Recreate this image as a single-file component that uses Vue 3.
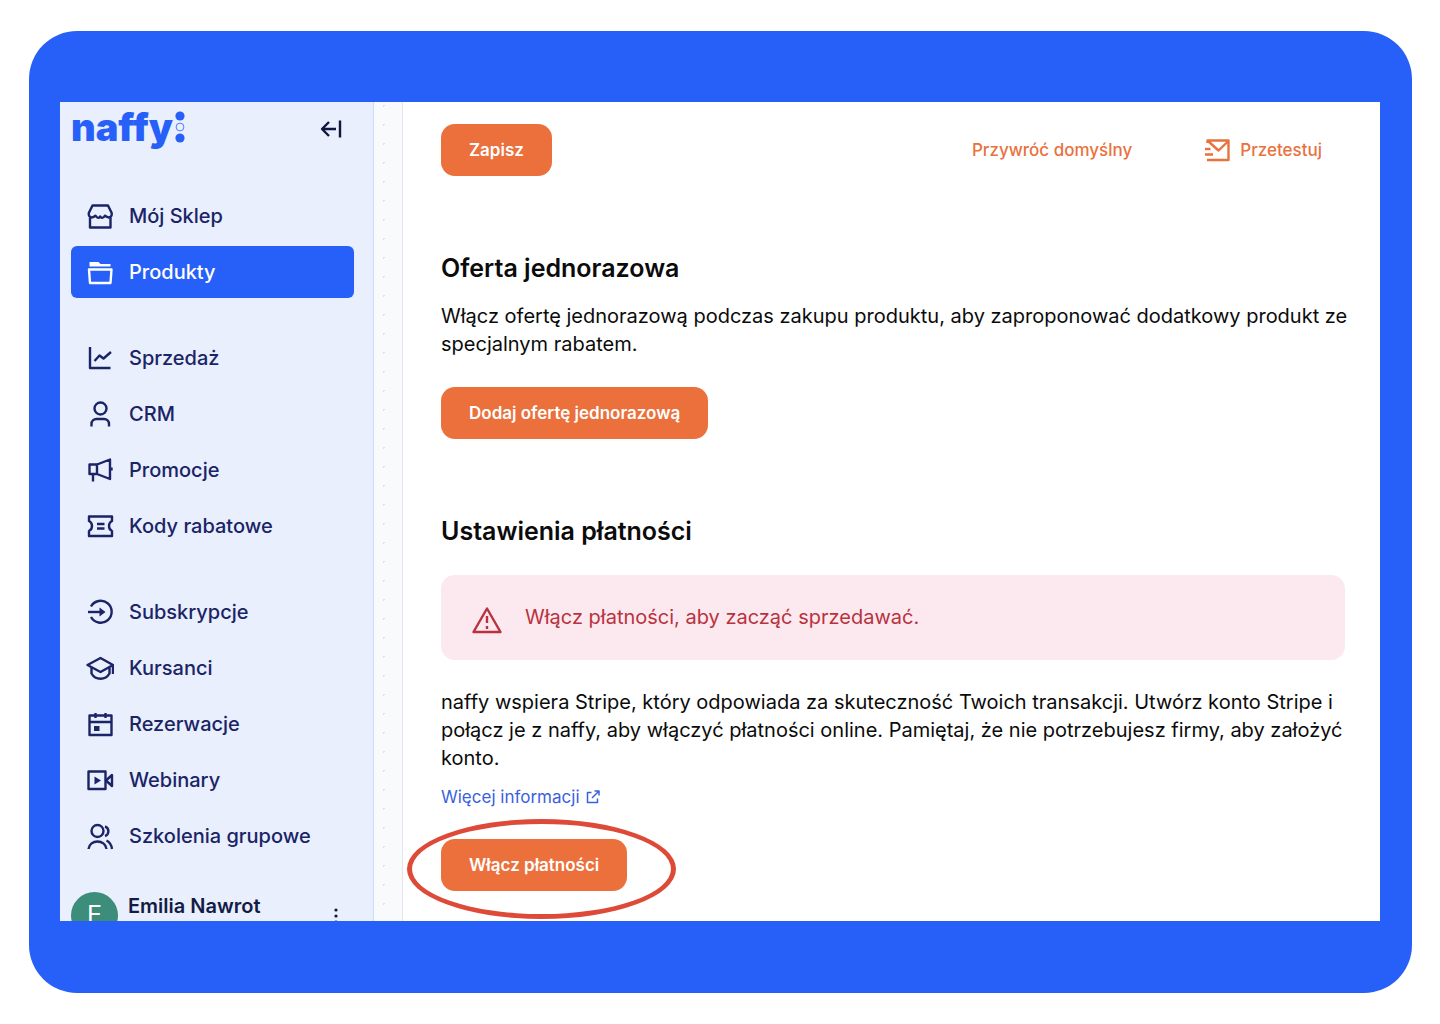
<template>
  <div class="page">
    <div class="frame">
      <div class="window">
        <aside class="sidebar">
          <header class="brand">
            <a class="logo" href="#">
              <span>naffy</span>
              <svg width="10" height="32" viewBox="0 0 10 32" aria-hidden="true">
                <circle cx="5" cy="5" r="4.6" fill="currentColor" />
                <circle cx="5" cy="16" r="3.9" fill="none" stroke="currentColor" stroke-width="0.8" />
                <circle cx="5" cy="27" r="4.6" fill="currentColor" />
              </svg>
            </a>
            <button class="icon-button" type="button" aria-label="Zwiń menu">
              <svg width="22" height="20" viewBox="0 0 22 20" class="line-icon">
                <path d="M16 10H2M9 3L2 10l7 7M20 1.500v17" />
              </svg>
            </button>
          </header>

          <nav class="menu">
            <ul v-for="(group, index) in menu" :key="index">
              <li v-for="item in group" :key="item.label">
                <a href="#" :class="{ active: item.active }">
                  <svg width="28" height="28" viewBox="0 0 28 28" class="line-icon">
                    <path v-for="d in item.lines" :key="d" :d="d" />
                    <path v-if="item.solid" :d="item.solid" fill="currentColor" stroke="none" />
                  </svg>
                  <span>{{ item.label }}</span>
                </a>
              </li>
            </ul>
          </nav>

          <footer class="user">
            <span class="avatar">E</span>
            <span class="user-name">Emilia Nawrot</span>
            <button class="icon-button more" type="button" aria-label="Więcej opcji">
              <svg width="4" height="18" viewBox="0 0 4 18" fill="currentColor">
                <circle cx="2" cy="3" r="1.600" />
                <circle cx="2" cy="9" r="1.600" />
                <circle cx="2" cy="15" r="1.600" />
              </svg>
            </button>
          </footer>
        </aside>

        <main class="content">
          <div class="toolbar">
            <button class="button" type="button">Zapisz</button>
            <div class="toolbar-links">
              <button class="text-button" type="button">Przywróć domyślny</button>
              <button class="text-button" type="button">
                <svg width="26" height="24" viewBox="0 0 26 24" class="line-icon">
                  <path d="M3.500 5V2.500h21V22H3M4 3l10.500 9.500L24.500 3M1 11h5.500M1 16.500h8" />
                </svg>
                Przetestuj
              </button>
            </div>
          </div>

          <section>
            <h2>Oferta jednorazowa</h2>
            <p>
              Włącz ofertę jednorazową podczas zakupu produktu, aby zaproponować dodatkowy produkt ze
              specjalnym rabatem.
            </p>
            <button class="button" type="button">Dodaj ofertę jednorazową</button>
          </section>

          <section class="payments">
            <h2>Ustawienia płatności</h2>
            <div class="alert" role="alert">
              <svg width="32" height="28" viewBox="0 0 32 28" class="line-icon">
                <path d="M16 2.500L29.500 26h-27zM16 10v7M16 20v3" />
              </svg>
              <span>Włącz płatności, aby zacząć sprzedawać.</span>
            </div>
            <p>
              naffy wspiera Stripe, który odpowiada za skuteczność Twoich transakcji. Utwórz konto Stripe i
              połącz je z naffy, aby włączyć płatności online. Pamiętaj, że nie potrzebujesz firmy, aby założyć
              konto.
            </p>
            <a class="more-info" href="#">
              Więcej informacji
              <svg width="14" height="14" viewBox="0 0 14 14" class="thin-icon">
                <path d="M5.500 2.500H1.500v10h10V8.500M8.500 1H13v4.500M13 1L6 8" />
              </svg>
            </a>
            <div class="highlighted">
              <button class="button" type="button">Włącz płatności</button>
              <span class="ring"></span>
            </div>
          </section>
        </main>
      </div>
    </div>
  </div>
</template>

<script setup>
const menu = [
  [
    {
      label: 'Mój Sklep',
      lines: [
        'M6.500 3.500h15.500l3.700 7.500c.4 2.500-.8 4.500-2.900 4.500c-1.800 0-2.800-.8-3.800-1.800c-1 1.500-2 2.200-2.600 2.200s-1.600-.6-2.200-1.400c-.6.8-1.600 1.400-2.200 1.400s-1.500-.7-2.500-2.200c-1 1-2 1.800-3.700 1.800c-2.200 0-3.400-2-3-4.500z',
        'M4 15.500v10h20.500v-10',
      ],
    },
    {
      label: 'Produkty',
      active: true,
      lines: ['M3 11.500h22.500l-1 13.500h-20.500z'],
      solid: 'M3.500 8.500V4h9l2 2h10v2.500z',
    },
  ],
  [
    { label: 'Sprzedaż', lines: ['M4 3v21h20.500', 'M8.500 17l5-5.500 4 3L25 8'] },
    { label: 'CRM', lines: ['M14.500 2.500a6 6 0 1 1 0 12a6 6 0 1 1 0-12z', 'M5.500 26.500v-2.500a5 5 0 0 1 5-5h7.500a5 5 0 0 1 5 5v2.500'] },
    { label: 'Promocje', lines: ['M3.500 8.500h7.500v9.500h-7.500zM11 8.500l13-5v19.500l-13-5M7 18v7.500M25.500 11.500v3'] },
    { label: 'Kody rabatowe', lines: ['M3 4.500h23v4.500c-4 2-4 8 0 10v5H3v-5c4-2 4-8 0-10z', 'M11 12h7.500M11 16.500h7.500'] },
  ],
  [
    {
      label: 'Subskrypcje',
      lines: ['M5 8.500a11 11 0 1 1 0 10.500', 'M2 14h14'],
      solid: 'M13.500 9.500l6 4.500-6 4.500z',
    },
    { label: 'Kursanci', lines: ['M1.500 11L14.500 4 27 11l-12.500 7z', 'M5.500 13.500v6c4 7 14 7 18 0v-6M27 11v9'] },
    {
      label: 'Rezerwacje',
      lines: ['M3.500 5.500h22v19.500h-22zM3.500 12h22M9.500 3v5M19.500 3v5'],
      solid: 'M8 16h5.500v5H8z',
    },
    {
      label: 'Webinary',
      lines: ['M2.500 5.500h17v17.500h-17z', 'M20 14.500l6-5.500v11z'],
      solid: 'M8.500 10.500l6.500 4-6.500 4z',
    },
    {
      label: 'Szkolenia grupowe',
      lines: ['M11.500 3a6 6 0 1 1 0 12a6 6 0 1 1 0-12z', 'M2.500 27c1-10 17-10 18 0M19 4.500c4.500 1.500 4.500 8 0 9.500M20.500 18.500c3 1.500 5 4.500 5.500 8.500'],
    },
  ],
]
</script>

<style>
body {
  margin: 0;
  background: #fff;
}
</style>

<style scoped>
.page {
  box-sizing: border-box;
  height: 100vh;
  min-height: 600px;
  padding: 31px 28px 31px 29px;
  font-family: Inter, 'Open Sans', sans-serif;
  font-size: 20px;
  color: #0b0b0b;
}

.frame {
  box-sizing: border-box;
  height: 100%;
  padding: 71px 32px 72px 31px;
  border-radius: 48px;
  background: #2760f8;
}

.window {
  display: flex;
  height: 100%;
  overflow: hidden;
  background-color: #f9fafc;
  background-image: radial-gradient(circle, #dcdfe6 1px, transparent 1px);
  background-size: 19px 19px;
  background-position: 10px 13px;
}

button {
  border: 0;
  background: none;
  font: inherit;
  cursor: pointer;
}

a {
  text-decoration: none;
}

svg {
  flex: none;
}

.line-icon,
.thin-icon {
  fill: none;
  stroke: currentColor;
  stroke-width: 2.4;
  stroke-linejoin: round;
}

.thin-icon {
  stroke-width: 1.5;
}

/* Sidebar */
.sidebar {
  box-sizing: border-box;
  flex: none;
  width: 314px;
  padding: 0 19px 0 11px;
  border-right: 1px solid #cfdcf8;
  background: #e9effd;
  color: #1a2466;
}

.brand {
  display: flex;
  justify-content: space-between;
  align-items: center;
  height: 54px;
  padding-right: 12px;
}

.logo {
  display: flex;
  align-items: center;
  gap: 2px;
  padding-bottom: 4px;
  color: #2760f8;
  font-size: 38px;
  font-weight: 900;
  line-height: 48px;
}

.icon-button {
  display: flex;
  padding: 0;
  color: #10163f;
}

.menu {
  display: flex;
  flex-direction: column;
  gap: 34px;
  padding-top: 34px;
}

.menu ul {
  display: flex;
  flex-direction: column;
  gap: 4px;
  margin: 0;
  padding: 0;
  list-style: none;
}

.menu a {
  display: flex;
  align-items: center;
  gap: 15px;
  height: 52px;
  padding: 0 15px;
  border-radius: 6px;
  color: inherit;
  font-weight: 500;
}

.menu a.active {
  background: #2760f8;
  color: #fff;
}

.user {
  display: flex;
  gap: 10px;
  height: 48px;
  padding: 30px 16px 0 0;
}

.avatar {
  flex: none;
  width: 47px;
  height: 47px;
  border-radius: 50%;
  background: #3c8d7a;
  color: #fff;
  font-size: 25px;
  line-height: 47px;
  text-align: center;
}

.user-name {
  flex: 1;
  color: #141c45;
  font-weight: 600;
  line-height: 28px;
}

.more {
  align-self: center;
}

/* Main card */
.content {
  flex: 1;
  min-width: 0;
  margin-left: 28px;
  padding: 22px 25px 0 38px;
  border-left: 1px solid #e4e6ec;
  background: #fff;
}

.toolbar,
.toolbar-links,
.text-button {
  display: flex;
  align-items: center;
}

.toolbar {
  justify-content: space-between;
}

.toolbar-links {
  gap: 72px;
  padding-right: 33px;
}

.text-button {
  gap: 10px;
  padding: 0;
  color: #e9713d;
  font-size: 17px;
  font-weight: 500;
}

.button {
  height: 52px;
  padding: 0 28px;
  border-radius: 14px;
  background: #eb703c;
  color: #fff;
  font-size: 17px;
  font-weight: 600;
}

h2 {
  margin: 76px 0 18px;
  font-size: 25px;
  font-weight: 600;
  line-height: 32px;
}

p {
  margin: 0 0 29px;
  line-height: 28px;
}

.alert {
  display: flex;
  gap: 22px;
  margin: 28px 10px 28px 0;
  padding: 28px 30px 26px;
  border-radius: 14px;
  background: #fbe9ef;
  color: #b9323f;
  line-height: 28px;
}

.alert svg {
  margin-top: 3px;
}

.payments p {
  margin-bottom: 13px;
}

.more-info {
  display: flex;
  align-items: center;
  gap: 6px;
  margin-bottom: 30px;
  color: #3b5fe0;
  font-size: 17px;
  line-height: 24px;
}

.highlighted {
  position: relative;
  width: fit-content;
}

.ring {
  position: absolute;
  inset: -20px -49px -28px -34px;
  border: 5px solid #dd4a38;
  border-radius: 50%;
  pointer-events: none;
}
</style>
